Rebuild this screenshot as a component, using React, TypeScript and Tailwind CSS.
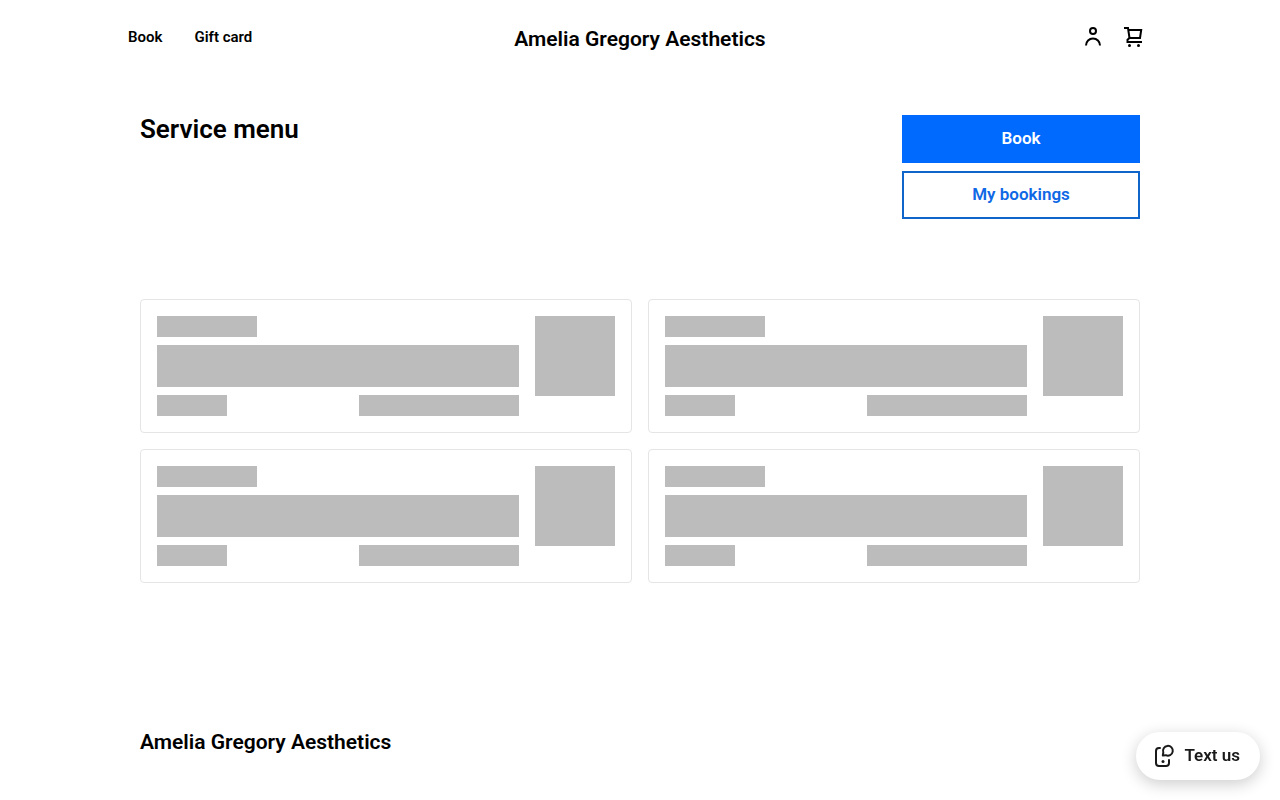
const placeholderCards = [1, 2, 3, 4];

function PersonIcon() {
  return (
    <svg className="size-6" viewBox="0 0 24 24" fill="none" stroke="currentColor" strokeWidth="2" aria-hidden="true">
      <circle cx="12" cy="7" r="3" />
      <path d="M5 21.500C5 17.500 8.100 14.500 12 14.500s7 3 7 7" />
    </svg>
  );
}

function CartIcon() {
  return (
    <svg className="size-6" viewBox="0 0 24 24" fill="none" stroke="currentColor" strokeWidth="2" aria-hidden="true">
      <path d="M3 4h4L8.500 14H19L20.200 6H7.500" />
      <path d="M8.500 14L6.500 15.800V18H21" />
      <circle cx="8.500" cy="21.500" r="1.500" fill="currentColor" stroke="none" />
      <circle cx="17.500" cy="21.500" r="1.500" fill="currentColor" stroke="none" />
    </svg>
  );
}

function TextIcon() {
  return (
    <svg className="size-6" viewBox="0 0 24 24" fill="none" stroke="currentColor" strokeWidth="2" strokeLinecap="round" strokeLinejoin="round" aria-hidden="true">
      <path d="M8 4H7a3 3 0 0 0-3 3v12a3 3 0 0 0 3 3h7a3 3 0 0 0 3-3v-3" />
      <path d="M10.800 11.500L11.300 8.500A4.900 4.900 0 1 1 13.800 11.200Z" />
      <circle cx="11" cy="17.500" r="1.500" fill="currentColor" stroke="none" />
    </svg>
  );
}

function PlaceholderCard() {
  return (
    <div className="flex items-start gap-4 rounded border border-[#e5e5e5] p-4">
      <div className="flex flex-1 flex-col gap-2">
        <div className="h-[21px] w-[100px] bg-[#bcbcbc]" />
        <div className="h-[42px] bg-[#bcbcbc]" />
        <div className="flex justify-between">
          <div className="h-[21px] w-[70px] bg-[#bcbcbc]" />
          <div className="h-[21px] w-40 bg-[#bcbcbc]" />
        </div>
      </div>
      <div className="size-20 bg-[#bcbcbc]" />
    </div>
  );
}

export default function App() {
  return (
    <div className="min-h-screen bg-white font-['Roboto',sans-serif] font-semibold text-black">
      <header className="mx-auto grid max-w-[1024px] grid-cols-[1fr_auto_1fr] items-start pt-6">
        <nav className="flex gap-8 text-[15px] leading-[26px]">
          <a href="#book">Book</a>
          <a href="#gift-card">Gift card</a>
        </nav>
        <a href="#home" className="pt-[3px] text-[21px] leading-6">Amelia Gregory Aesthetics</a>
        <div className="flex justify-end gap-4 pr-[7px]">
          <button type="button" aria-label="Account"><PersonIcon /></button>
          <button type="button" aria-label="Cart"><CartIcon /></button>
        </div>
      </header>

      <main className="mx-auto max-w-[1000px] pt-16">
        <div className="flex items-start justify-between">
          <h1 className="text-[26px] leading-7">Service menu</h1>
          <div className="flex w-[238px] flex-col gap-2 text-[17px] leading-6">
            <button type="button" className="h-12 bg-[#006aff] pb-0.5 text-white">Book</button>
            <button type="button" className="h-12 border-2 border-[#0f65c9] pb-0.5 text-[#0f68e5]">My bookings</button>
          </div>
        </div>
        <div className="grid grid-cols-2 gap-4 pt-20">
          {placeholderCards.map((id) => <PlaceholderCard key={id} />)}
        </div>
      </main>

      <footer className="mx-auto max-w-[1000px] pt-36 pb-11">
        <h2 className="pt-[3px] text-[21px] leading-6">Amelia Gregory Aesthetics</h2>
      </footer>

      <button type="button" className="fixed right-5 bottom-5 flex h-12 items-center gap-2 rounded-full bg-white pr-5 pl-4 text-[17px] text-[#1a1a1a] shadow-[0_4px_16px_rgba(0,0,0,0.2)]">
        <TextIcon />
        Text us
      </button>
    </div>
  );
}
